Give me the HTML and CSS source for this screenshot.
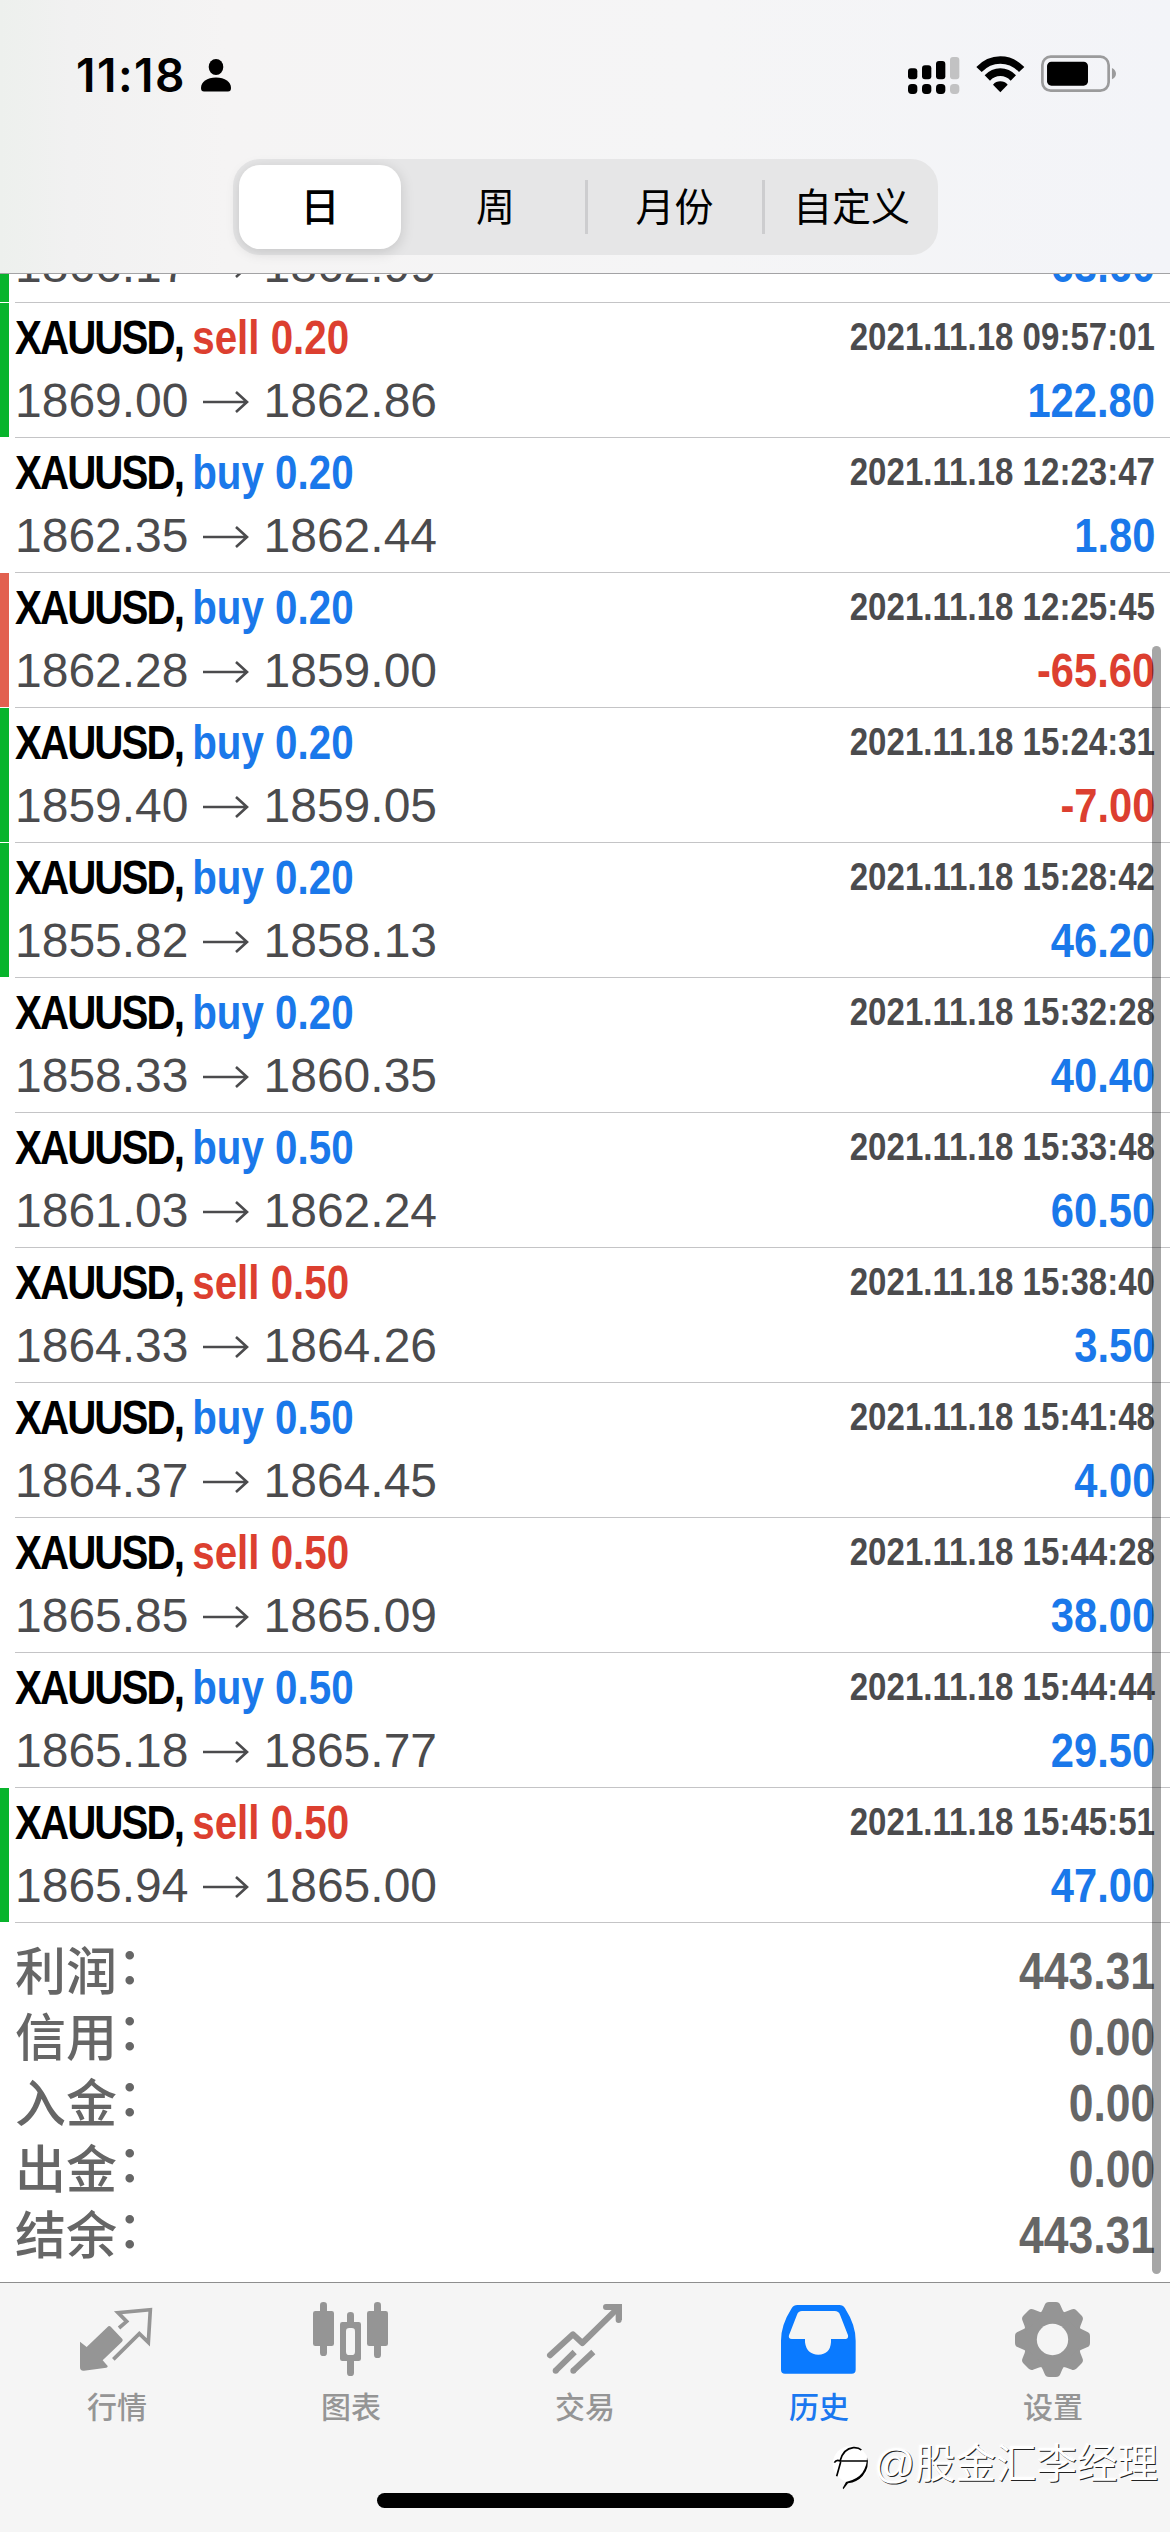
FILE: index.html
```html
<!DOCTYPE html>
<html lang="zh-CN">
<head>
<meta charset="utf-8">
<title>历史</title>
<link rel="stylesheet" href="styles.css">
</head>
<body>
<div class="screen">
  <header class="header">
    <div class="status">
      <div class="clock">
        <span class="time">11:18</span>
        <svg class="person" viewBox="0 0 30 33"><ellipse cx="15" cy="8" rx="7.3" ry="8"/><path d="M0 29C0 23 6 18.500 15 18.500S30 23 30 29Q30 32.500 27 32.500H3Q0 32.500 0 29Z"/></svg>
      </div>
      <div class="indicators">
        <svg class="signal" viewBox="0 0 156 114">
          <rect x="0" y="34" width="28" height="33" rx="9"/><rect x="42" y="25" width="28" height="42" rx="9"/><rect x="84" y="12" width="28" height="55" rx="9"/><rect class="dim" x="126" y="0" width="28" height="67" rx="9"/>
          <rect x="0" y="81" width="28" height="30" rx="11"/><rect x="42" y="81" width="28" height="30" rx="11"/><rect x="84" y="81" width="28" height="30" rx="11"/><rect class="dim" x="126" y="81" width="28" height="30" rx="11"/>
        </svg>
        <svg class="wifi" viewBox="254 44 147 111"><path d="M255 77Q286 45 327 45T399 77L383 92Q359 67 327 67T271 92Z"/><path d="M280 102Q300 81 327 81T374 102L358 118Q345 104 327 104T296 118Z"/><path d="M305 130Q314 120 327 120T349 130L327 153Z"/></svg>
        <svg class="battery" viewBox="450 46 228 112"><rect class="case" x="454" y="51" width="199" height="102" rx="25"/><rect x="468" y="66" width="123" height="72" rx="13"/><path class="nub" d="M663 85Q675 91 675 102T663 119Z"/></svg>
      </div>
    </div>
    <nav class="segments">
      <span class="segment selected">日</span>
      <span class="segment">周</span>
      <span class="segment ruled">月份</span>
      <span class="segment ruled">自定义</span>
    </nav>
  </header>

  <main class="list">
    <div class="deal gain scrolled"><div class="line"><span class="price"><span>1866.17</span><svg class="arrow" viewBox="0 0 46 24"><path d="M0 12H44M33 2L44 12L33 22"/></svg><span>1862.99</span></span><span class="profit">63.60</span></div></div>
    <div class="deal gain"><div class="line"><span class="symbol">XAUUSD, <b class="sell">sell 0.20</b></span><span class="date">2021.11.18 09:57:01</span></div><div class="line"><span class="price"><span>1869.00</span><svg class="arrow" viewBox="0 0 46 24"><path d="M0 12H44M33 2L44 12L33 22"/></svg><span>1862.86</span></span><span class="profit">122.80</span></div></div>
    <div class="deal"><div class="line"><span class="symbol">XAUUSD, <b class="buy">buy 0.20</b></span><span class="date">2021.11.18 12:23:47</span></div><div class="line"><span class="price"><span>1862.35</span><svg class="arrow" viewBox="0 0 46 24"><path d="M0 12H44M33 2L44 12L33 22"/></svg><span>1862.44</span></span><span class="profit">1.80</span></div></div>
    <div class="deal stop"><div class="line"><span class="symbol">XAUUSD, <b class="buy">buy 0.20</b></span><span class="date">2021.11.18 12:25:45</span></div><div class="line"><span class="price"><span>1862.28</span><svg class="arrow" viewBox="0 0 46 24"><path d="M0 12H44M33 2L44 12L33 22"/></svg><span>1859.00</span></span><span class="profit loss">-65.60</span></div></div>
    <div class="deal gain"><div class="line"><span class="symbol">XAUUSD, <b class="buy">buy 0.20</b></span><span class="date">2021.11.18 15:24:31</span></div><div class="line"><span class="price"><span>1859.40</span><svg class="arrow" viewBox="0 0 46 24"><path d="M0 12H44M33 2L44 12L33 22"/></svg><span>1859.05</span></span><span class="profit loss">-7.00</span></div></div>
    <div class="deal gain"><div class="line"><span class="symbol">XAUUSD, <b class="buy">buy 0.20</b></span><span class="date">2021.11.18 15:28:42</span></div><div class="line"><span class="price"><span>1855.82</span><svg class="arrow" viewBox="0 0 46 24"><path d="M0 12H44M33 2L44 12L33 22"/></svg><span>1858.13</span></span><span class="profit">46.20</span></div></div>
    <div class="deal"><div class="line"><span class="symbol">XAUUSD, <b class="buy">buy 0.20</b></span><span class="date">2021.11.18 15:32:28</span></div><div class="line"><span class="price"><span>1858.33</span><svg class="arrow" viewBox="0 0 46 24"><path d="M0 12H44M33 2L44 12L33 22"/></svg><span>1860.35</span></span><span class="profit">40.40</span></div></div>
    <div class="deal"><div class="line"><span class="symbol">XAUUSD, <b class="buy">buy 0.50</b></span><span class="date">2021.11.18 15:33:48</span></div><div class="line"><span class="price"><span>1861.03</span><svg class="arrow" viewBox="0 0 46 24"><path d="M0 12H44M33 2L44 12L33 22"/></svg><span>1862.24</span></span><span class="profit">60.50</span></div></div>
    <div class="deal"><div class="line"><span class="symbol">XAUUSD, <b class="sell">sell 0.50</b></span><span class="date">2021.11.18 15:38:40</span></div><div class="line"><span class="price"><span>1864.33</span><svg class="arrow" viewBox="0 0 46 24"><path d="M0 12H44M33 2L44 12L33 22"/></svg><span>1864.26</span></span><span class="profit">3.50</span></div></div>
    <div class="deal"><div class="line"><span class="symbol">XAUUSD, <b class="buy">buy 0.50</b></span><span class="date">2021.11.18 15:41:48</span></div><div class="line"><span class="price"><span>1864.37</span><svg class="arrow" viewBox="0 0 46 24"><path d="M0 12H44M33 2L44 12L33 22"/></svg><span>1864.45</span></span><span class="profit">4.00</span></div></div>
    <div class="deal"><div class="line"><span class="symbol">XAUUSD, <b class="sell">sell 0.50</b></span><span class="date">2021.11.18 15:44:28</span></div><div class="line"><span class="price"><span>1865.85</span><svg class="arrow" viewBox="0 0 46 24"><path d="M0 12H44M33 2L44 12L33 22"/></svg><span>1865.09</span></span><span class="profit">38.00</span></div></div>
    <div class="deal"><div class="line"><span class="symbol">XAUUSD, <b class="buy">buy 0.50</b></span><span class="date">2021.11.18 15:44:44</span></div><div class="line"><span class="price"><span>1865.18</span><svg class="arrow" viewBox="0 0 46 24"><path d="M0 12H44M33 2L44 12L33 22"/></svg><span>1865.77</span></span><span class="profit">29.50</span></div></div>
    <div class="deal gain"><div class="line"><span class="symbol">XAUUSD, <b class="sell">sell 0.50</b></span><span class="date">2021.11.18 15:45:51</span></div><div class="line"><span class="price"><span>1865.94</span><svg class="arrow" viewBox="0 0 46 24"><path d="M0 12H44M33 2L44 12L33 22"/></svg><span>1865.00</span></span><span class="profit">47.00</span></div></div>

    <div class="totals">
      <div class="total"><span class="label">利润<i>：</i></span><span class="sum">443.31</span></div>
      <div class="total"><span class="label">信用<i>：</i></span><span class="sum">0.00</span></div>
      <div class="total"><span class="label">入金<i>：</i></span><span class="sum">0.00</span></div>
      <div class="total"><span class="label">出金<i>：</i></span><span class="sum">0.00</span></div>
      <div class="total"><span class="label">结余<i>：</i></span><span class="sum">443.31</span></div>
    </div>
    <div class="scrollbar"></div>
  </main>

  <footer class="tabbar">
    <div class="tabs">
      <div class="tab">
        <svg class="icon" viewBox="36 24 270 240"><path d="M60 155L80 171L145 109Q149 107 153 111L187 147Q190 151 186 155L128 211L143 228Q144 232 139 233L72 242Q60 243 60 232Z"/><path class="thin" d="M177 114L200 94L174 68L271 59L265 157L238 131L160 208"/></svg>
        <span>行情</span>
      </div>
      <div class="tab">
        <svg class="icon" viewBox="738 24 270 240"><rect x="780" y="36" width="21" height="162" rx="10"/><rect x="759" y="63" width="63" height="105" rx="7"/><rect x="942" y="36" width="21" height="168" rx="10"/><rect x="921" y="63" width="63" height="105" rx="7"/><rect x="861" y="66" width="21" height="192" rx="10"/><rect x="840" y="96" width="63" height="117" rx="7"/><rect class="hole" x="858" y="114" width="27" height="81" rx="10"/></svg>
        <span>图表</span>
      </div>
      <div class="tab">
        <svg class="icon" viewBox="60 24 270 240"><path class="thick" d="M90 196L159 133L187 159L292 56"/><path class="thick" d="M258 51H296V90"/><path d="M258 42H306V90H288V60H258Z"/><path class="thick butt" d="M107 242L164 186M160 242L220 186"/><circle cx="107" cy="242" r="9"/><circle cx="160" cy="242" r="9"/></svg>
        <span>交易</span>
      </div>
      <div class="tab active">
        <svg class="icon" viewBox="762 24 270 240"><path d="M832 45H958Q969 45 975 55Q1007 105 1007 152V239Q1007 251 995 251H795Q783 251 783 239V152Q783 105 815 55Q821 45 832 45Z"/><path class="hole" d="M846 63H944Q956 63 960 74L984 136Q986 147 976 147H933V157Q930 194 895 194T855 157V147H816Q804 147 807 136L831 74Q835 63 846 63Z"/></svg>
        <span>历史</span>
      </div>
      <div class="tab">
        <svg class="icon" viewBox="564 24 270 240">
          <defs><path id="tooth" d="M658 75Q668 62 674 45Q677 36 687 36H708Q718 36 721 45Q727 62 737 75Z"/></defs>
          <circle cx="697.500" cy="148.500" r="87"/>
          <use href="#tooth"/><use href="#tooth" transform="rotate(45 697.5 148.5)"/><use href="#tooth" transform="rotate(90 697.5 148.5)"/><use href="#tooth" transform="rotate(135 697.5 148.5)"/><use href="#tooth" transform="rotate(180 697.5 148.5)"/><use href="#tooth" transform="rotate(225 697.5 148.5)"/><use href="#tooth" transform="rotate(270 697.5 148.5)"/><use href="#tooth" transform="rotate(315 697.5 148.5)"/>
          <circle class="hole" cx="697.500" cy="148.500" r="47"/>
        </svg>
        <span>设置</span>
      </div>
    </div>
    <div class="home-bar"></div>
    <div class="watermark">
      <svg class="mark" viewBox="30 470 120 140"><circle class="white" cx="92" cy="530" r="54"/><path class="stroke" d="M43 526Q49 516 60 521Q70 484 100 481Q116 480 124 488M60 521H143M62 524L50 567"/><path d="M141 510Q150 540 128 566Q112 584 84 588L70 606L68 602L78 584Q112 576 127 556Q142 534 141 510Z"/></svg>
      <span>@股金汇李经理</span>
    </div>
  </footer>
</div>
</body>
</html>
```
FILE: styles.css
```css
* { box-sizing: border-box; }

body {
  margin: 0;
  background: #fff;
  font-family: "Liberation Sans", "Noto Sans CJK SC", sans-serif;
}

.screen {
  width: 1170px;
  height: 2532px;
  display: flex;
  flex-direction: column;
  overflow: hidden;
}

/* Header */
.header {
  height: 274px;
  border-bottom: 1px solid #a3a3a5;
  background: linear-gradient(90deg, #edf0ed 0, #f1f1f1 70px, #f5f4f4 225px, #f5f5f6 700px, #f3f4f8 1170px);
}

.status {
  height: 159px;
  padding: 50px 53px 0 76px;
  display: flex;
  justify-content: space-between;
  align-items: flex-start;
}

.clock { display: flex; align-items: center; height: 50px; }
.time {
  width: 125px;
  font: 600 46px/50px Inter, sans-serif;
  letter-spacing: 1.500px;
}
.person { width: 30px; height: 33px; }

.indicators { display: flex; align-items: center; height: 48px; }
.signal { width: 52px; height: 38px; margin: 3px 16px 0 0; }
.wifi { width: 49px; height: 37px; margin-right: 16px; }
.battery { width: 76px; height: 37.300px; }
.dim { fill: #c2c2c3; }
.case { fill: none; stroke: #9b9b9c; stroke-width: 8; }
.nub { fill: #9b9b9c; }

.segments {
  width: 705px;
  height: 96px;
  margin-left: 233px;
  padding: 6px;
  display: flex;
  border-radius: 27px;
  background: #e6e6e7;
}
.segment {
  flex: none;
  width: 177px;
  height: 84px;
  text-align: center;
  font: 400 39px/79px "Noto Sans CJK SC", sans-serif;
}
.segment.selected {
  width: 162px;
  margin-right: 6px;
  font-weight: 500;
  border-radius: 21px;
  background: #fff;
  box-shadow: 0 3px 14px rgba(0, 0, 0, .15);
}
.ruled {
  padding-left: 4px;
  background: linear-gradient(#cdcdcf, #cdcdcf) 1px 15px / 3px 54px no-repeat;
}

/* Deals */
.list {
  position: relative;
  height: 2008px;
  overflow: hidden;
}
.deal {
  height: 135px;
  padding: 3px 15px 0;
  background: linear-gradient(#c4c4c6, #c4c4c6) 15px 100% / 1155px 1px no-repeat;
}
.gain {
  background: linear-gradient(#c4c4c6, #c4c4c6) 15px 100% / 1155px 1px no-repeat,
    linear-gradient(#08b42c, #08b42c) 0 -1px / 9px 100% no-repeat;
}
.stop {
  background: linear-gradient(#c4c4c6, #c4c4c6) 15px 100% / 1155px 1px no-repeat,
    linear-gradient(#e2604f, #e2604f) 0 -1px / 9px 100% no-repeat;
}
/* Row partly scrolled under the header */
.deal.scrolled {
  display: flex;
  flex-direction: column;
  justify-content: flex-end;
  height: 29px;
  padding: 0 15px 6px;
}
.line {
  display: flex;
  flex: none;
  justify-content: space-between;
  height: 63px;
  line-height: 63px;
  white-space: nowrap;
}
.symbol, .date, .profit, .sum { font-weight: 700; }
.symbol {
  font-size: 48px;
  letter-spacing: -2.300px;
  transform: scaleX(.84);
  transform-origin: left;
}
.symbol b { letter-spacing: 0; }
.buy { color: #1a78ea; }
.sell { color: #dc3f30; }
.date {
  font-size: 39px;
  line-height: 61px;
  color: #4b4b4d;
  transform: scaleX(.848);
  transform-origin: right;
}
.price {
  display: flex;
  align-items: center;
  font-size: 48px;
  color: #4b4b4d;
}
.arrow {
  width: 46px;
  height: 24px;
  margin: 3px 15px 0 14px;
  fill: none;
  stroke: #4b4b4d;
  stroke-width: 2.600;
}
.profit {
  font-size: 48px;
  color: #1a78ea;
  transform: scaleX(.868);
  transform-origin: right;
}
.loss { color: #dc3f30; }

/* Totals */
.totals { padding: 15px 15px 0; color: #666; }
.total {
  display: flex;
  justify-content: space-between;
  height: 66px;
  line-height: 66px;
  font-size: 51px;
}
.label {
  font-family: "Noto Sans CJK SC", sans-serif;
  font-weight: 500;
  line-height: 60px;
}
.label i { font-style: normal; line-height: 0; vertical-align: 6px; }
.sum { transform: scaleX(.872); transform-origin: right; line-height: 67px; }

.scrollbar {
  position: absolute;
  left: 1152px;
  top: 372px;
  width: 9px;
  height: 1628px;
  border-radius: 5px;
  background: rgba(0, 0, 0, .35);
}

/* Tab bar */
.tabbar {
  position: relative;
  height: 250px;
  border-top: 1px solid #8e8e8e;
  background: #f5f5f5;
}
.tabs { display: flex; height: 210px; padding-top: 15px; }
.tab {
  flex: 1;
  display: flex;
  flex-direction: column;
  align-items: center;
  color: #959595;
  fill: #959595;
  font: 500 30px/40px "Noto Sans CJK SC", sans-serif;
}
.tab span { margin-top: 7px; }
.tab.active { color: #1a78f0; fill: #0a7aff; }
.icon { width: 90px; height: 80px; }
.hole { fill: #f5f5f5; }
.thin { fill: none; stroke: #959595; stroke-width: 11; }
.thick { fill: none; stroke: #959595; stroke-width: 18; stroke-linecap: round; stroke-linejoin: round; }
.butt { stroke-linecap: butt; }

.home-bar {
  width: 417px;
  height: 15px;
  margin-left: 377px;
  border-radius: 8px;
  background: #000;
}

.watermark {
  position: absolute;
  left: 830px;
  top: 151px;
  display: flex;
  align-items: flex-start;
  font: 400 40.500px/60px "Liberation Sans", "Noto Sans CJK SC", sans-serif;
  color: #fff;
  text-shadow: 1px 1px 0 #222, 0 0 3px #fff;
  white-space: nowrap;
}
.mark { width: 40px; height: 46.700px; margin: 10px 4px 0 0; }
.mark .white { fill: #fff; }
.stroke { fill: none; stroke: #000; stroke-width: 5; }
```
